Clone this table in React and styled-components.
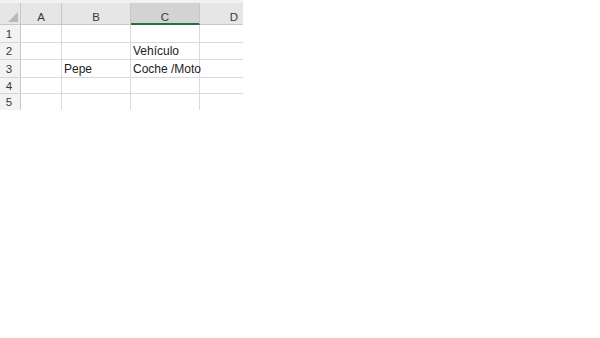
import React from "react";
import styled, { createGlobalStyle } from "styled-components";

const GlobalStyle = createGlobalStyle`
  html, body {
    margin: 0;
    padding: 0;
    background: #ffffff;
  }
`;

const Sheet = styled.div`
  width: 243px;
  overflow: hidden;
  padding-top: 3px;
  background: linear-gradient(#f2f2f2 0 3px, transparent 3px);
  font-family: "Liberation Sans", Arial, sans-serif;
`;

const Grid = styled.div`
  display: grid;
  grid-template-columns: 21px 41px 69px 69px 69px;
  grid-template-rows: 22px 18px 17px 18px 16px 16px;
  width: 269px;
`;

const Corner = styled.div`
  background: #e6e6e6;
  border-right: 1px solid #c8c8c8;
  border-bottom: 1px solid #c8c8c8;
  display: flex;
  align-items: flex-end;
  justify-content: flex-end;
  padding: 0 2px 2px 0;
  &::after {
    content: "";
    width: 0;
    height: 0;
    border-left: 10px solid transparent;
    border-bottom: 10px solid #b9b9b9;
  }
`;

const ColHead = styled.div`
  background: ${(p) => (p.$selected ? "#d3d3d3" : "#e6e6e6")};
  border-right: 1px solid #c8c8c8;
  border-bottom: ${(p) => (p.$selected ? "2px solid #217346" : "1px solid #c8c8c8")};
  color: #3a3a3a;
  font-size: 11.5px;
  display: flex;
  align-items: flex-end;
  justify-content: center;
  padding-bottom: ${(p) => (p.$selected ? "0" : "1px")};
`;

const RowHead = styled.div`
  background: #f3f3f3;
  border-right: 1px solid #c8c8c8;
  border-bottom: ${(p) => (p.$last ? "none" : "1px solid #d6d6d6")};
  color: #3a3a3a;
  font-size: 11.5px;
  display: flex;
  align-items: center;
  justify-content: center;
  padding-right: 2px;
`;

const Cell = styled.div`
  border-right: 1px solid #dadada;
  border-bottom: ${(p) => (p.$last ? "none" : "1px solid #dadada")};
  font-size: 12px;
  color: #222222;
  display: flex;
  align-items: flex-end;
  padding: 0 0 0 2px;
  line-height: 15px;
  white-space: nowrap;
  overflow: visible;
`;

const columns = ["A", "B", "C", "D"];
const rows = [
  ["", "", "", ""],
  ["", "", "Vehículo", ""],
  ["", "Pepe", "Coche /Moto", ""],
  ["", "", "", ""],
  ["", "", "", ""],
];

export default function App() {
  return (
    <>
      <GlobalStyle />
      <Sheet>
        <Grid>
          <Corner />
          {columns.map((c) => (
            <ColHead key={c} $selected={c === "C"}>
              {c}
            </ColHead>
          ))}
          {rows.map((row, i) => (
            <React.Fragment key={i}>
              <RowHead $last={i === rows.length - 1}>{i + 1}</RowHead>
              {row.map((v, j) => (
                <Cell key={j} $last={i === rows.length - 1}>
                  {v}
                </Cell>
              ))}
            </React.Fragment>
          ))}
        </Grid>
      </Sheet>
    </>
  );
}
